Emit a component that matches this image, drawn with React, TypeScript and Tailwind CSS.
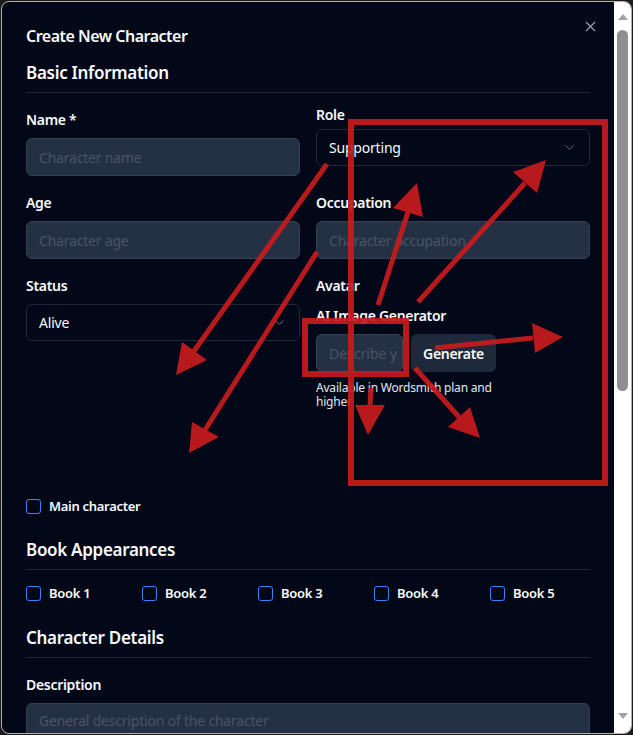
import React from "react";
import { ChevronDown, X } from "lucide-react";

const font = { fontFamily: '"Noto Sans", "Open Sans", sans-serif' };

function Label({ children, className = "" }: { children: React.ReactNode; className?: string }) {
  return <div className={"text-[14px] leading-[20px] font-semibold text-[#f8fafc] tracking-[-0.3px] " + className}>{children}</div>;
}

function Input({ placeholder }: { placeholder: string }) {
  return (
    <div className="mt-2 h-[38px] rounded-[6px] border border-[#364153] bg-[#243044] px-3 flex items-center text-[14px] text-[#4a5466] tracking-[-0.2px] overflow-hidden whitespace-nowrap">
      {placeholder}
    </div>
  );
}

function Select({ value, className = "" }: { value: string; className?: string }) {
  return (
    <div className={"h-[37px] rounded-[6px] border border-[#1e293b] pl-3 pr-[12px] flex items-center justify-between text-[14px] text-[#f8fafc] tracking-[-0.2px] " + className}>
      <span>{value}</span>
      <ChevronDown size={15} strokeWidth={1.5} className="text-[#6b7280]" />
    </div>
  );
}

function Check({ label }: { label: string }) {
  return (
    <div className="flex items-center gap-2">
      <div className="w-[15px] h-[15px] rounded-[3px] border border-[#3b82f6]" />
      <span className="text-[13px] leading-[20px] font-semibold text-[#f8fafc] tracking-[-0.3px]">{label}</span>
    </div>
  );
}

function Heading({ children, className = "" }: { children: React.ReactNode; className?: string }) {
  return (
    <div className={"border-b border-[#1e293b] " + className}>
      <div className="text-[17px] leading-[28px] font-semibold text-[#f8fafc] tracking-[-0.3px]">{children}</div>
    </div>
  );
}

function Annotations() {
  const arrows = [
    { t: [327, 164], m: [194, 351], p: "176,375 182,342 207,360" },
    { t: [317, 252], m: [205, 430], p: "189,453 192,422 219,437" },
    { t: [378, 305], m: [408, 212], p: "417,183 393,208 423,217" },
    { t: [418, 302], m: [525, 183], p: "546,160 513,172 537,193" },
    { t: [435, 348], m: [533, 338], p: "563,337 532,323 535,353" },
    { t: [371, 388], m: [370, 405], p: "368,435 355,405 385,405" },
    { t: [415, 368], m: [459, 417], p: "480,438 448,427 470,407" },
  ];
  return (
    <svg className="absolute left-0 top-0 pointer-events-none" width="633" height="735" viewBox="0 0 633 735">
      <g opacity="0.92">
        <rect x="351" y="122" width="254" height="361" fill="none" stroke="#c81b1d" strokeWidth="6" />
        <rect x="305" y="321" width="101" height="53" fill="none" stroke="#c81b1d" strokeWidth="6" />
        {arrows.map((a, i) => (
          <g key={i}>
            <line x1={a.t[0]} y1={a.t[1]} x2={a.m[0]} y2={a.m[1]} stroke="#c81b1d" strokeWidth="5" />
            <polygon points={a.p} fill="#c81b1d" />
          </g>
        ))}
      </g>
    </svg>
  );
}

export default function App() {
  return (
    <div className="relative w-[633px] h-[735px] bg-[#1b1b1b] p-[1px]" style={font}>
      <div className="w-full h-full rounded-[8px] border border-[#b0b0b0] overflow-hidden flex bg-[#020817]">
        <div className="relative flex-1 overflow-hidden px-6 pt-[22px]">
          <X size={17} strokeWidth={1.5} className="absolute right-[15px] top-[16px] text-[#a1a7b3]" />
          <div className="text-[16px] leading-[24px] font-semibold text-[#f8fafc] tracking-[-0.5px]">Create New Character</div>

          <Heading className="mt-[11px] pb-[5px]">Basic Information</Heading>

          <div className="mt-[17px] grid grid-cols-2 gap-x-4 gap-y-[17px]">
            <div>
              <Label>Name *</Label>
              <Input placeholder="Character name" />
            </div>
            <div className="-mt-[5px]">
              <Label>Role</Label>
              <Select value="Supporting" className="mt-1 h-[36px]" />
            </div>
            <div>
              <Label>Age</Label>
              <Input placeholder="Character age" />
            </div>
            <div>
              <Label>Occupation</Label>
              <Input placeholder="Character occupation" />
            </div>
            <div>
              <Label>Status</Label>
              <Select value="Alive" className="mt-2" />
            </div>
            <div>
              <Label>Avatar</Label>
              <Label className="mt-[10px]">AI Image Generator</Label>
              <div className="w-[180px]">
                <div className="mt-2 flex gap-2">
                  <div className="w-[87px] h-[38px] rounded-[6px] border border-[#364153] bg-[#243044] pl-3 flex items-center text-[14px] text-[#4a5466] overflow-hidden whitespace-nowrap">
                    <span className="block w-[69px] overflow-hidden whitespace-nowrap">Describe yo</span>
                  </div>
                  <div className="w-[85px] h-[38px] rounded-[6px] bg-[#1e293b] flex items-center justify-center text-[14px] font-semibold text-[#f8fafc] tracking-[-0.3px]">
                    Generate
                  </div>
                </div>
                <div className="mt-[9px] text-[12px] leading-[14px] text-[#e2e8f0] tracking-[-0.2px]">
                  Available in Wordsmith plan and higher
                </div>
              </div>
            </div>
          </div>

          <div className="mt-[87px]">
            <Check label="Main character" />
          </div>

          <Heading className="mt-[20px] pb-[5px]">Book Appearances</Heading>
          <div className="mt-[13px] grid grid-cols-5 gap-4">
            <Check label="Book 1" />
            <Check label="Book 2" />
            <Check label="Book 3" />
            <Check label="Book 4" />
            <Check label="Book 5" />
          </div>

          <Heading className="mt-[21px] pb-[5px]">Character Details</Heading>
          <Label className="mt-[17px]">Description</Label>
          <div className="mt-2 h-[80px] rounded-[6px] border border-[#364153] bg-[#243044] px-3 pt-[7px] text-[14px] leading-[20px] text-[#4a5466] tracking-[-0.2px]">
            General description of the character
          </div>
        </div>
        <div className="w-[17px] bg-white flex flex-col items-center pt-[12px] pb-[14px]">
          <div className="w-0 h-0 border-l-[5px] border-r-[5px] border-b-[6px] border-l-transparent border-r-transparent border-b-[#a3a3a3]" />
          <div className="mt-[10px] w-[11px] h-[361px] rounded-full bg-[#8f8f8f]" />
          <div className="flex-1" />
          <div className="w-0 h-0 border-l-[5px] border-r-[5px] border-t-[6px] border-l-transparent border-r-transparent border-t-[#a3a3a3]" />
        </div>
      </div>
      <Annotations />
    </div>
  );
}
